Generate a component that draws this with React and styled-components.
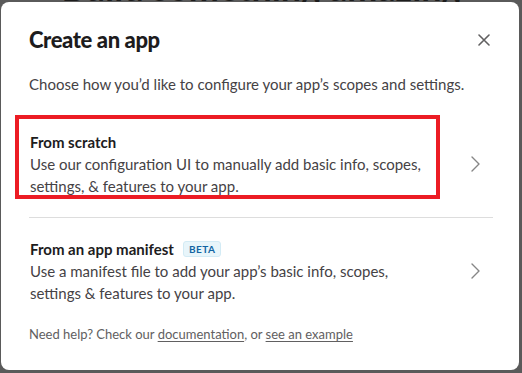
import React from 'react';
import styled, { createGlobalStyle } from 'styled-components';

const GlobalStyle = createGlobalStyle`
  html, body {
    margin: 0;
    padding: 0;
    background: #5a5a5a;
    font-family: Lato, "Noto Sans", sans-serif;
    -webkit-font-smoothing: antialiased;
  }
`;

const Backdrop = styled.div`
  position: relative;
  width: 522px;
  height: 373px;
  overflow: hidden;
  background: #5a5a5a;
`;

const PageHeading = styled.h1`
  margin: -31px 0 0;
  text-align: center;
  font-size: 36px;
  font-weight: 700;
  color: #1c1c1c;
  line-height: 36px;
`;

const Modal = styled.div`
  position: absolute;
  top: 2px;
  left: 1px;
  width: 518px;
  height: 368px;
  background: #fff;
  border-radius: 8px;
  display: flex;
  flex-direction: column;
  box-sizing: border-box;
  padding: 0 26px 0 28px;
  color: #1d1c1d;
`;

const Header = styled.div`
  display: flex;
  align-items: center;
  justify-content: space-between;
  height: 71px;
  padding-top: 4px;
  box-sizing: border-box;
`;

const Title = styled.h2`
  margin: 0;
  font-size: 22px;
  font-weight: 900;
  letter-spacing: -0.4px;
  line-height: 30px;
`;

const CloseButton = styled.button`
  border: none;
  background: none;
  padding: 0;
  margin-right: 3px;
  width: 12px;
  height: 12px;
  display: flex;
  color: #616061;
`;

const Intro = styled.p`
  margin: 0 0 16px;
  font-size: 15px;
  line-height: 22px;
  color: #454245;
`;

const Option = styled.div`
  display: flex;
  align-items: center;
  justify-content: space-between;
  padding: 20px 13px 20px 1px;
  border-bottom: ${p => (p.$divider ? '1px solid #dddddd' : 'none')};
`;

const OptionText = styled.div`
  position: relative;
  width: 400px;

  ${p => p.$highlighted && `
    &::after {
      content: '';
      position: absolute;
      left: -15px;
      top: -16px;
      width: 425px;
      height: 84px;
      box-sizing: border-box;
      border: 4px solid #ec1c24;
    }
  `}
`;

const OptionTitle = styled.div`
  display: flex;
  align-items: center;
  gap: 9px;
  font-size: 15px;
  font-weight: 700;
  line-height: 22px;
`;

const OptionDesc = styled.div`
  font-size: 15px;
  line-height: 22px;
  color: #454245;
`;

const Badge = styled.span`
  font-size: 10px;
  font-weight: 700;
  letter-spacing: 0.5px;
  line-height: 14px;
  padding: 0 5px;
  border-radius: 3px;
  color: #1264a3;
  background: #e8f5fa;
  border: 1px solid #d3ebf5;
`;

const Footer = styled.p`
  margin: 0;
  font-size: 13px;
  line-height: 20px;
  color: #616061;

  a {
    color: #616061;
    text-decoration: underline;
    text-underline-offset: 2px;
  }
`;

const Chevron = () => (
  <svg width="9" height="16" viewBox="0 0 9 16" fill="none">
    <path d="M1 1l7 7-7 7" stroke="#868686" strokeWidth="1.4" strokeLinecap="round" strokeLinejoin="round" />
  </svg>
);

const CloseIcon = () => (
  <svg width="12" height="12" viewBox="0 0 12 12" fill="none">
    <path d="M1 1l10 10M11 1L1 11" stroke="currentColor" strokeWidth="1.6" strokeLinecap="round" />
  </svg>
);

export default function App() {
  return (
    <>
      <GlobalStyle />
      <Backdrop>
        <PageHeading>Build something amazing</PageHeading>
        <Modal>
          <Header>
            <Title>Create an app</Title>
            <CloseButton aria-label="Close"><CloseIcon /></CloseButton>
          </Header>
          <Intro>Choose how you’d like to configure your app’s scopes and settings.</Intro>
          <Option $divider>
            <OptionText $highlighted>
              <OptionTitle>From scratch</OptionTitle>
              <OptionDesc>Use our configuration UI to manually add basic info, scopes, settings, &amp; features to your app.</OptionDesc>
            </OptionText>
            <Chevron />
          </Option>
          <Option>
            <OptionText>
              <OptionTitle>From an app manifest <Badge>BETA</Badge></OptionTitle>
              <OptionDesc>Use a manifest file to add your app’s basic info, scopes, settings &amp; features to your app.</OptionDesc>
            </OptionText>
            <Chevron />
          </Option>
          <Footer>
            Need help? Check our <a>documentation</a>, or <a>see an example</a>
          </Footer>
        </Modal>
      </Backdrop>
    </>
  );
}
